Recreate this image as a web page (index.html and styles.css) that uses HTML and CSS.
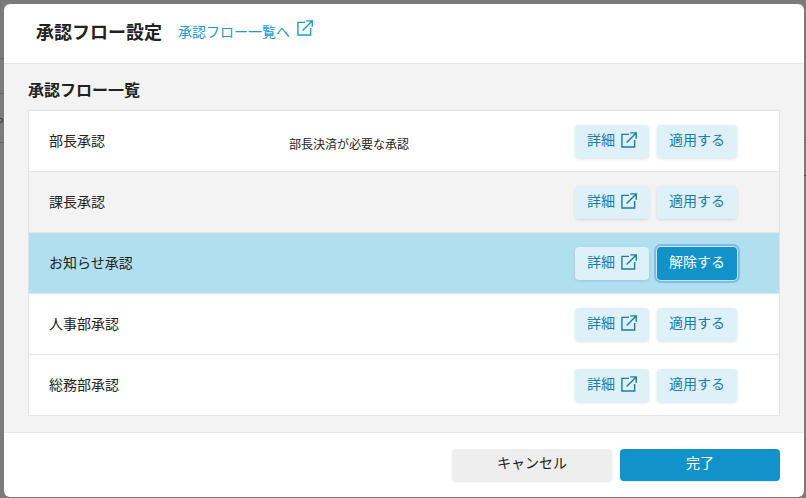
FILE: index.html
```html
<!DOCTYPE html>
<html lang="ja">
<head>
<meta charset="utf-8">
<title>承認フロー設定</title>
<link rel="stylesheet" href="styles.css">
</head>
<body>
<svg class="defs" width="0" height="0" aria-hidden="true">
  <symbol id="ext" viewBox="0 0 17 17">
    <path d="M8.5 2.5H1V16H14.5V8.5" fill="none" stroke="currentColor" stroke-width="1.5"/>
    <path d="M6 11.2L15.8 1.4M9.8 .9H16.2V7.2" fill="none" stroke="currentColor" stroke-width="1.5"/>
  </symbol>
</svg>
<div class="backdrop" aria-hidden="true">
  <span class="line line-a"></span>
  <span class="line line-b"></span>
  <span class="line line-c"></span>
  <span class="line line-d"></span>
  <span class="line line-e"></span>
  <span class="back-text">や</span>
</div>
<main class="modal">
  <header class="modal-head">
    <h1 class="modal-title">承認フロー設定</h1>
    <a class="modal-link" href="#">承認フロー一覧へ<svg class="link-icon"><use href="#ext"/></svg></a>
  </header>
  <section class="modal-body">
    <h2 class="section-title">承認フロー一覧</h2>
    <ul class="flow-list">
      <li class="flow-row">
        <span class="flow-name">部長承認</span>
        <span class="flow-desc">部長決済が必要な承認</span>
        <span class="flow-actions">
          <button class="btn btn-soft btn-detail">詳細<svg class="btn-icon"><use href="#ext"/></svg></button>
          <button class="btn btn-soft btn-apply">適用する</button>
        </span>
      </li>
      <li class="flow-row flow-row-muted">
        <span class="flow-name">課長承認</span>
        <span class="flow-desc"></span>
        <span class="flow-actions">
          <button class="btn btn-soft btn-detail">詳細<svg class="btn-icon"><use href="#ext"/></svg></button>
          <button class="btn btn-soft btn-apply">適用する</button>
        </span>
      </li>
      <li class="flow-row flow-row-active">
        <span class="flow-name">お知らせ承認</span>
        <span class="flow-desc"></span>
        <span class="flow-actions">
          <button class="btn btn-soft btn-detail">詳細<svg class="btn-icon"><use href="#ext"/></svg></button>
          <button class="btn btn-solid btn-apply btn-focus">解除する</button>
        </span>
      </li>
      <li class="flow-row">
        <span class="flow-name">人事部承認</span>
        <span class="flow-desc"></span>
        <span class="flow-actions">
          <button class="btn btn-soft btn-detail">詳細<svg class="btn-icon"><use href="#ext"/></svg></button>
          <button class="btn btn-soft btn-apply">適用する</button>
        </span>
      </li>
      <li class="flow-row">
        <span class="flow-name">総務部承認</span>
        <span class="flow-desc"></span>
        <span class="flow-actions">
          <button class="btn btn-soft btn-detail">詳細<svg class="btn-icon"><use href="#ext"/></svg></button>
          <button class="btn btn-soft btn-apply">適用する</button>
        </span>
      </li>
    </ul>
  </section>
  <footer class="modal-foot">
    <button class="btn btn-wide btn-grey">キャンセル</button>
    <button class="btn btn-wide btn-solid">完了</button>
  </footer>
</main>
</body>
</html>
```
FILE: styles.css
```css
* { box-sizing: border-box; }
html, body { height: 100%; }
body {
  margin: 0;
  background: #7b7b7b;
  color: #222;
  font-family: "Noto Sans CJK JP", "Noto Sans", sans-serif;
  overflow: hidden;
}
.defs { position: absolute; }
.backdrop { position: absolute; inset: 0; }
.line { position: absolute; height: 1px; background: #666; }
.line-a { left: 0; width: 4px; top: 58px; }
.line-b { left: 0; width: 4px; top: 93px; }
.line-c { left: 0; width: 4px; top: 142px; }
.line-d { right: 0; width: 2px; top: 142px; }
.line-e { right: 0; width: 2px; top: 175px; background: #444; }
.back-text { position: absolute; left: -8px; top: 113px; font-size: 12px; line-height: 16px; color: #333; }

.modal {
  position: relative;
  display: flex;
  flex-direction: column;
  width: 800px;
  height: 493px;
  margin: 4px 0 0 4px;
  background: #fff;
  border-radius: 6px;
  overflow: hidden;
}
.modal-head {
  display: flex;
  align-items: center;
  height: 60px;
  padding: 0 0 0 32px;
  border-bottom: 1px solid #e6e6e6;
}
.modal-title {
  margin: -5px 16px 0 0;
  font-size: 18px;
  line-height: 26px;
  font-weight: 700;
  color: #222;
}
.modal-link {
  display: flex;
  align-items: center;
  margin-top: -6px;
  color: #1a9ace;
  font-size: 14px;
  line-height: 20px;
  text-decoration: none;
}
.link-icon { width: 16px; height: 16px; margin: -5px 0 0 7px; }

.modal-body {
  flex: 1;
  display: flex;
  flex-direction: column;
  padding: 0 24px 16px;
  background: #f3f3f3;
}
.section-title {
  margin: 0;
  height: 46px;
  padding-top: 13px;
  font-size: 16px;
  line-height: 24px;
  font-weight: 700;
  color: #222;
}
.flow-list {
  list-style: none;
  margin: 0;
  padding: 0;
  background: #fff;
  border: 1px solid #e2e2e2;
  border-bottom: 0;
}
.flow-row {
  display: flex;
  height: 61px;
  padding: 14px 42px 0 20px;
  border-bottom: 1px solid #e6e6e6;
  font-size: 14px;
  line-height: 20px;
}
.flow-row-muted { background: #f3f3f3; }
.flow-row-active { background: #b0dff0; }
.flow-name { width: 240px; padding-top: 5px; color: #222; }
.flow-desc { flex: 1; padding-top: 9px; font-size: 12px; color: #222; }
.flow-actions { display: flex; gap: 8px; }

.btn {
  display: flex;
  align-items: center;
  justify-content: center;
  height: 33px;
  padding: 0;
  border: 0;
  border-radius: 4px;
  font-family: inherit;
  font-size: 14px;
  line-height: 20px;
}
.btn-detail { width: 74px; padding-bottom: 5px; }
.btn-apply { width: 80px; padding-bottom: 5px; }
.btn-soft {
  background: #dff1f8;
  color: #1a7ca6;
  box-shadow: 0 1px 3px rgba(0, 0, 0, .12);
}
.btn-solid { background: #1192c8; color: #fff; }
.btn-focus { box-shadow: 0 0 0 1px #c5e6f5, 0 0 0 3px #80b9ea; }
.btn-icon { width: 16px; height: 16px; margin: 2px 0 0 6px; }
.modal-foot {
  display: flex;
  justify-content: flex-end;
  gap: 8px;
  height: 65px;
  padding: 16px 24px;
  border-top: 1px solid #e6e6e6;
}
.btn-wide { width: 160px; height: 32px; padding-bottom: 7px; box-shadow: 0 1px 2px rgba(0, 0, 0, .1); }
.btn-grey { background: #eee; color: #222; }
```
